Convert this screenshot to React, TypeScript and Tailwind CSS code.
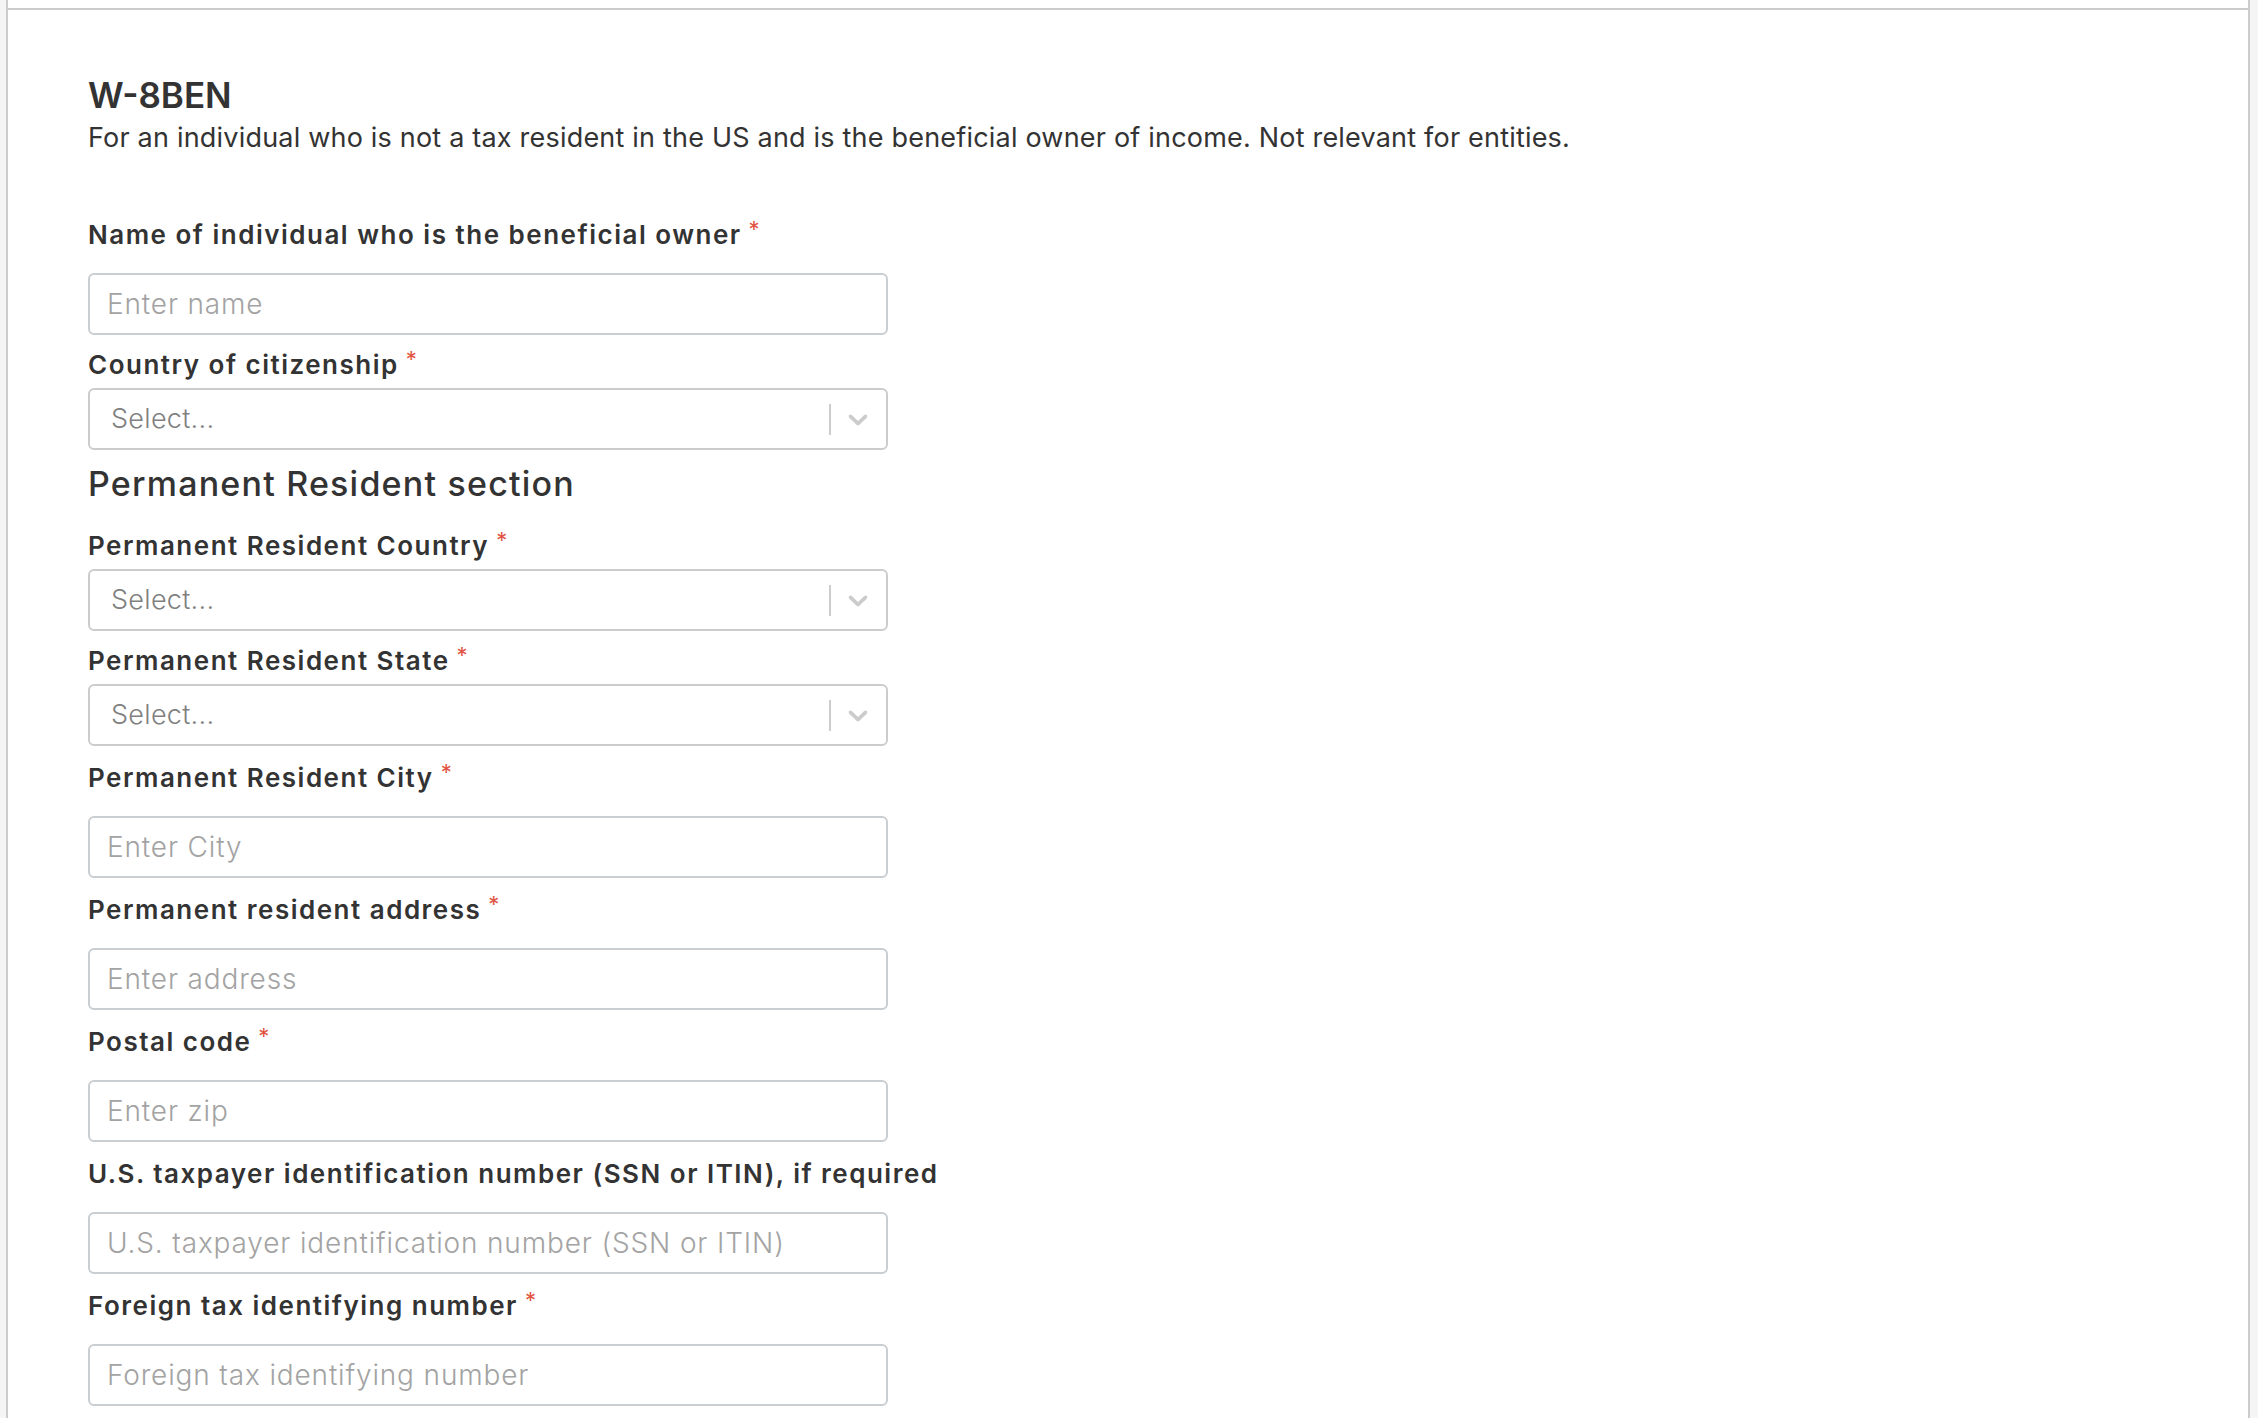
import React from "react";

const font = { fontFamily: "Inter, 'Noto Sans', sans-serif" };

function Asterisk() {
  return (
    <span className="ml-[7px] inline-block align-top text-[22px] leading-[22px] font-normal tracking-normal text-[#e0533f]">
      *
    </span>
  );
}

function Label({ text, required = true }: { text: string; required?: boolean }) {
  return (
    <div className="h-[34px] text-[26px] leading-[34px] font-semibold tracking-[1.5px] text-[#333333] whitespace-nowrap">
      {text}
      {required && <Asterisk />}
    </div>
  );
}

function TextField({
  label,
  placeholder,
  required = true,
  className = "",
}: {
  label: string;
  placeholder: string;
  required?: boolean;
  className?: string;
}) {
  return (
    <div className={"flex flex-col " + className}>
      <Label text={label} required={required} />
      <input
        placeholder={placeholder}
        className="mt-[21px] h-[62px] w-[800px] rounded-[6px] border-2 border-[#c9ced3] bg-white px-[17px] text-[28px] font-light tracking-[0.85px] text-[#333333] placeholder:text-[#a3a3a3] outline-none"
        style={font}
      />
    </div>
  );
}

function SelectField({ label }: { label: string }) {
  return (
    <div className="flex flex-col">
      <Label text={label} />
      <div className="mt-[6px] flex h-[62px] w-[800px] items-center rounded-[6px] border-2 border-[#cccccc] bg-white">
        <div className="flex-1 pl-[21px] text-[27px] font-light tracking-[0.3px] text-[#808080]">Select...</div>
        <div className="h-[31px] w-[2px] bg-[#cccccc]" />
        <div className="ml-[11px] mr-[12px] flex h-[32px] w-[32px] items-center justify-center">
          <svg width="32" height="32" viewBox="0 0 20 20" fill="#cccccc">
            <path d="M4.516 7.548c0.436-0.446 1.043-0.481 1.576 0l3.908 3.747 3.908-3.747c0.533-0.481 1.141-0.446 1.574 0 0.436 0.445 0.408 1.197 0 1.615-0.406 0.418-4.695 4.502-4.695 4.502-0.217 0.223-0.502 0.335-0.787 0.335s-0.57-0.112-0.789-0.335c0 0-4.287-4.084-4.695-4.502s-0.436-1.17 0-1.615z" />
          </svg>
        </div>
      </div>
    </div>
  );
}

export default function App() {
  return (
    <div className="min-h-[1418px] bg-[#f5f5f5] pl-[6px] pr-[8px]" style={font}>
      <div className="min-h-[1418px] border-x-2 border-[#cccccc] bg-white">
        <div className="h-[8px]" />
        <div className="border-t-2 border-[#cccccc] pl-[80px] pt-[63px] pb-[40px]">
          <h1 className="text-[35px] leading-[44px] font-semibold text-[#333333]">W-8BEN</h1>
          <p className="mt-[3px] text-[27px] leading-[36px] tracking-[0.2px] text-[#333333]">
            For an individual who is not a tax resident in the US and is the beneficial owner of income. Not relevant for entities.
          </p>
          <div className="mt-[62px] flex flex-col gap-[13px]">
            <TextField label="Name of individual who is the beneficial owner" placeholder="Enter name" />
            <SelectField label="Country of citizenship" />
          </div>
          <h2 className="mt-[14px] text-[34px] leading-[40px] font-medium tracking-[1.2px] text-[#333333]">
            Permanent Resident section
          </h2>
          <div className="mt-[25px] flex flex-col gap-[13px]">
            <SelectField label="Permanent Resident Country" />
            <SelectField label="Permanent Resident State" />
            <TextField className="mt-[2px]" label="Permanent Resident City" placeholder="Enter City" />
            <TextField className="mt-[2px]" label="Permanent resident address" placeholder="Enter address" />
            <TextField className="mt-[2px]" label="Postal code" placeholder="Enter zip" />
            <TextField
              className="mt-[2px]"
              label="U.S. taxpayer identification number (SSN or ITIN), if required"
              placeholder="U.S. taxpayer identification number (SSN or ITIN)"
              required={false}
            />
            <TextField className="mt-[2px]" label="Foreign tax identifying number" placeholder="Foreign tax identifying number" />
          </div>
        </div>
      </div>
    </div>
  );
}
